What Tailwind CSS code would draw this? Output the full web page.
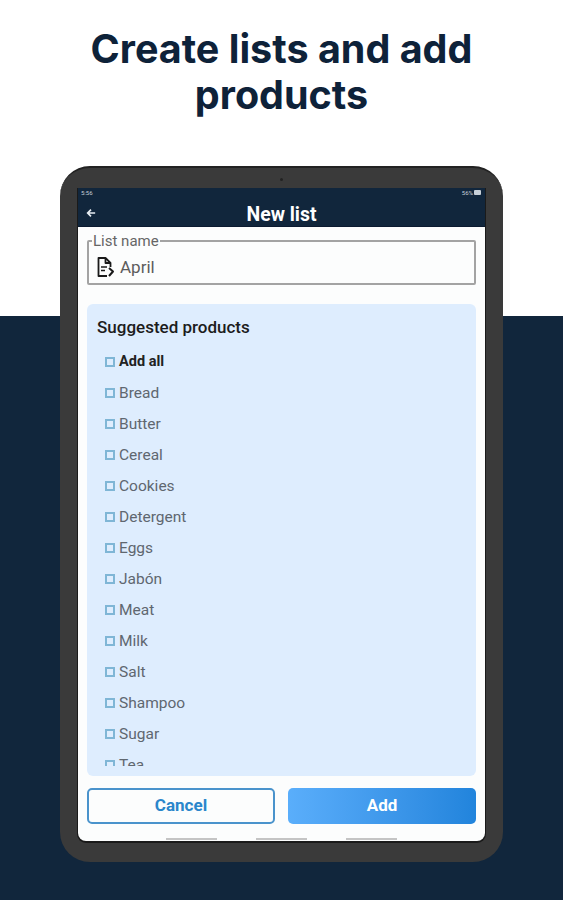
<!DOCTYPE html>
<html lang="en">

<head>
    <meta charset="UTF-8" />
    <meta name="viewport" content="width=device-width, initial-scale=1.0" />
    <title>Create lists and add products</title>
    <script src="https://cdn.jsdelivr.net/npm/@tailwindcss/browser@4"></script>
</head>

<body class="m-0">
    <div class="w-[563px] h-[900px] overflow-hidden pt-[26px] bg-[linear-gradient(to_bottom,#ffffff_316px,#11263c_316px)] font-['Roboto',sans-serif]">
        <!-- Heading -->
        <h1 class="text-center text-[39.5px] leading-[46px] font-bold text-[#0e2239] font-['Inter',sans-serif]">
            Create lists and add<br />products
        </h1>

        <!-- Tablet frame -->
        <div class="relative ml-[60px] mt-[48px] w-[443px] h-[696px] rounded-[30px] bg-[#3a3a3a] border-t-2 border-t-[#222] pt-[20px] pl-[18px]">
            <div class="absolute top-[10px] left-[220px] w-[3px] h-[3px] rounded-full bg-[#222]"></div>

            <!-- Screen -->
            <div class="relative w-[407px] h-[653px] bg-[#fcfdfd] rounded-b-[8px] overflow-hidden flex flex-col shadow-[0_1px_0_1px_#1a1a1a]">
                <!-- App bar -->
                <div class="h-[39px] shrink-0 bg-[#11263c] border-b border-b-[#0b1a30] relative text-white">
                    <div class="flex justify-between px-[3px] pt-[1px] text-[6px] leading-[7px] text-[#c8d0d8]">
                        <span>5:56</span>
                        <span class="flex items-center gap-[1px]">56%
                            <svg class="w-[8px] h-[5px]" viewBox="0 0 8 5" fill="#c8d0d8">
                                <rect x="0" y="0" width="7" height="5" rx="1" />
                            </svg>
                        </span>
                    </div>
                    <svg class="absolute left-[8px] top-[20px] w-[10px] h-[10px]" viewBox="0 0 24 24" fill="none" stroke="#e8edf2" stroke-width="4">
                        <path d="M22 12H4M12 4l-8 8 8 8" />
                    </svg>
                    <div class="text-center text-[19.4px] leading-[22px] font-bold pt-[8px]">New list</div>
                </div>

                <!-- List name -->
                <fieldset class="mx-[9px] mt-[7px] h-[51px] shrink-0 border-2 border-[#a3a3a3] rounded-[2px] pl-[3px] pr-2 block">
                    <legend class="px-[1px] text-[15px] leading-[14px] text-[#666]">List name</legend>
                    <div class="flex items-center gap-[5px] pl-[3px] pt-[8px]">
                        <svg class="w-[20px] h-[22px]" viewBox="0 0 20 22" fill="none" stroke="#1a1a1a" stroke-width="1.8" stroke-linejoin="round">
                            <path d="M12 20H3.5V2h7l5 5v4" />
                            <path d="M10.5 2v5h5" />
                            <path d="M6 11h6M6 14.500h4" stroke-width="1.500" />
                            <path d="M14 12l4 3.500-4 4.500" stroke-width="2" />
                        </svg>
                        <span class="text-[17px] leading-[20px] text-[#5c5c5c]">April</span>
                    </div>
                </fieldset>

                <!-- Suggested products -->
                <div class="mx-[9px] mt-[19px] h-[472px] shrink-0 rounded-[6px] bg-[#deedfe] pl-[10px] pt-[13px] pb-[10px] flex flex-col">
                    <div class="text-[17px] leading-[20px] font-medium text-[#1c1c1c]">Suggested products</div>
                    <div class="mt-[15px] flex-1 overflow-hidden pl-[8px] flex flex-col gap-[11px] text-[15.5px] leading-[20px] text-[#5f6770]">
                        <label class="flex items-center gap-[4px] font-bold text-[#222] text-[14.500px]"><span class="w-[10px] h-[10px] shrink-0 border-2 border-[#7fb6d6]"></span>Add all</label>
                        <label class="flex items-center gap-[4px]"><span class="w-[10px] h-[10px] shrink-0 border-2 border-[#7fb6d6]"></span>Bread</label>
                        <label class="flex items-center gap-[4px]"><span class="w-[10px] h-[10px] shrink-0 border-2 border-[#7fb6d6]"></span>Butter</label>
                        <label class="flex items-center gap-[4px]"><span class="w-[10px] h-[10px] shrink-0 border-2 border-[#7fb6d6]"></span>Cereal</label>
                        <label class="flex items-center gap-[4px]"><span class="w-[10px] h-[10px] shrink-0 border-2 border-[#7fb6d6]"></span>Cookies</label>
                        <label class="flex items-center gap-[4px]"><span class="w-[10px] h-[10px] shrink-0 border-2 border-[#7fb6d6]"></span>Detergent</label>
                        <label class="flex items-center gap-[4px]"><span class="w-[10px] h-[10px] shrink-0 border-2 border-[#7fb6d6]"></span>Eggs</label>
                        <label class="flex items-center gap-[4px]"><span class="w-[10px] h-[10px] shrink-0 border-2 border-[#7fb6d6]"></span>Jabón</label>
                        <label class="flex items-center gap-[4px]"><span class="w-[10px] h-[10px] shrink-0 border-2 border-[#7fb6d6]"></span>Meat</label>
                        <label class="flex items-center gap-[4px]"><span class="w-[10px] h-[10px] shrink-0 border-2 border-[#7fb6d6]"></span>Milk</label>
                        <label class="flex items-center gap-[4px]"><span class="w-[10px] h-[10px] shrink-0 border-2 border-[#7fb6d6]"></span>Salt</label>
                        <label class="flex items-center gap-[4px]"><span class="w-[10px] h-[10px] shrink-0 border-2 border-[#7fb6d6]"></span>Shampoo</label>
                        <label class="flex items-center gap-[4px]"><span class="w-[10px] h-[10px] shrink-0 border-2 border-[#7fb6d6]"></span>Sugar</label>
                        <label class="flex items-center gap-[4px]"><span class="w-[10px] h-[10px] shrink-0 border-2 border-[#7fb6d6]"></span>Tea</label>
                    </div>
                </div>

                <!-- Buttons -->
                <div class="mx-[9px] mt-[12px] flex gap-[13px]">
                    <button class="w-[188px] h-[36px] rounded-[5px] border-2 border-[#4a93cc] text-[#2a86cb] text-[17px] font-bold">Cancel</button>
                    <button class="w-[188px] h-[36px] rounded-[5px] bg-gradient-to-r from-[#5aaefb] to-[#2184dc] text-white text-[17px] font-bold">Add</button>
                </div>

                <!-- Nav hints -->
                <div class="absolute bottom-[1px] left-[88px] flex gap-[39px]">
                    <div class="w-[51px] h-[2px] bg-[#c4c4c4]"></div>
                    <div class="w-[51px] h-[2px] bg-[#c4c4c4]"></div>
                    <div class="w-[51px] h-[2px] bg-[#c4c4c4]"></div>
                </div>
            </div>
        </div>
    </div>
</body>

</html>
